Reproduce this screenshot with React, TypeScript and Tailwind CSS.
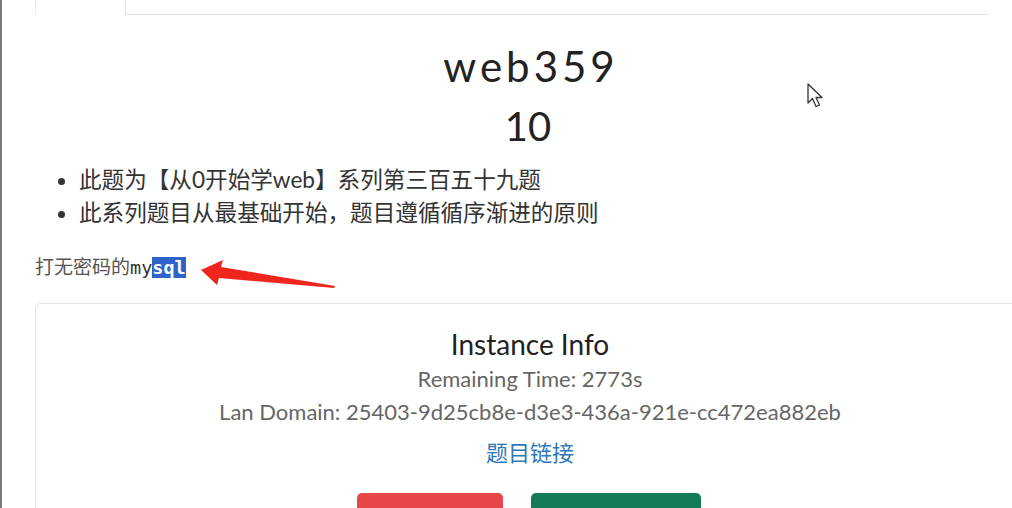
const font = "font-['Lato','Noto_Sans_CJK_SC',sans-serif]";

const Cursor = () => (
  <svg width="20" height="28" viewBox="0 0 20 28" className="absolute left-[805px] top-[83px]">
    <path d="M1 1 L1 20 L5.5 15.5 L9 23.5 L12.5 22 L9 14.5 L15 14.5 Z" fill="#fff" stroke="#333" strokeWidth="1.3" strokeLinejoin="round" />
  </svg>
);

const Arrow = () => (
  <svg width="150" height="40" viewBox="0 0 150 40" className="absolute left-[193px] top-[252px]">
    <path d="M6 18 L28 8 L26 15 L140 34 L139 36 L24 26 L22 33 Z" fill="#f0261e" />
  </svg>
);

export default function App() {
  return (
    <div className={`relative w-[1012px] h-[508px] overflow-hidden bg-white border-l-2 border-[#7a7a7a] ${font}`}>
      <div className="flex pl-[33px]">
        <div className="w-[90px] h-[15px] border-l border-[#efefef]" />
        <div className="w-[864px] h-[15px] border-l border-b border-[#e2e2e2]" />
      </div>

      <div className="flex flex-col items-center pl-[42px] pt-[27px] text-[#222]">
        <h1 className="text-[42px] leading-[48px] tracking-[4px] pl-[6px]">web359</h1>
        <h2 className="text-[40px] leading-[48px] mt-[12px]">10</h2>
      </div>

      <ul className="list-disc pl-[77px] mt-[13px] text-[22.6px] leading-[33px] text-[#333]">
        <li>此题为【从0开始学web】系列第三百五十九题</li>
        <li>此系列题目从最基础开始，题目遵循循序渐进的原则</li>
      </ul>

      <p className="mt-[23px] pl-[33px] text-[18.5px] leading-[27px] text-[#555]">
        <span className="font-['Noto_Sans_CJK_SC',sans-serif] text-[19px]">打无密码的</span>
        <span className="font-['DejaVu_Sans_Mono',monospace] text-[#333]">my</span>
        <span className="font-['DejaVu_Sans_Mono',monospace] font-bold text-white bg-[#2f63c9]">sql</span>
      </p>

      <div className="ml-[33px] w-[990px] mt-[22px] border border-[#e4e4e4] rounded-tl-[6px] pt-[22px] flex flex-col items-center">
        <div className="text-[28px] leading-[36px] text-[#222]">Instance Info</div>
        <div className="text-[22px] leading-[33px] text-[#666]">Remaining Time: 2773s</div>
        <div className="text-[22px] leading-[33px] text-[#666]">Lan Domain: 25403-9d25cb8e-d3e3-436a-921e-cc472ea882eb</div>
        <a className="mt-[8px] text-[22px] leading-[34px] text-[#2f78b8]">题目链接</a>
        <div className="flex gap-[28px] mt-[23px] pr-[2px]">
          <button className="w-[146px] h-[40px] rounded-[5px] bg-[#e8474a]" />
          <button className="w-[170px] h-[40px] rounded-[5px] bg-[#137b56]" />
        </div>
      </div>

      <Arrow />
      <Cursor />
    </div>
  );
}
